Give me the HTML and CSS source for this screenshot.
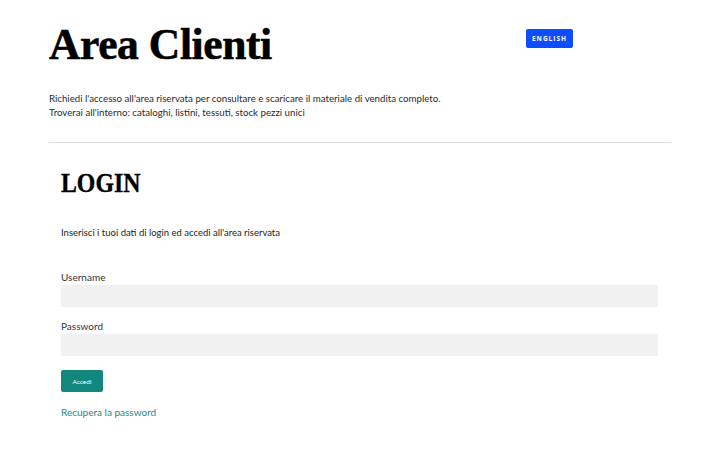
FILE: index.html
```html
<!DOCTYPE html>
<html lang="it">
<head>
<meta charset="utf-8">
<title>Area Clienti</title>
<link rel="stylesheet" href="styles.css">
</head>
<body>
<main class="page">
  <header class="intro">
    <div class="intro-top">
      <h1 class="title">Area Clienti</h1>
      <a class="lang-btn" href="#">ENGLISH</a>
    </div>
    <p class="lead">Richiedi l'accesso all'area riservata per consultare e scaricare il materiale di vendita completo.<br>Troverai all'interno: cataloghi, listini, tessuti, stock pezzi unici</p>
  </header>
  <section class="login">
    <h2 class="login-title">LOGIN</h2>
    <p class="login-text">Inserisci i tuoi dati di login ed accedi all'area riservata</p>
    <form class="login-form">
      <label class="field">
        <span class="field-label">Username</span>
        <input class="field-input" type="text">
      </label>
      <label class="field">
        <span class="field-label">Password</span>
        <input class="field-input" type="password">
      </label>
      <button class="submit" type="button">Accedi</button>
      <a class="recover" href="#">Recupera la password</a>
    </form>
  </section>
</main>
</body>
</html>
```
FILE: styles.css
```css
* { box-sizing: border-box; }
html, body { margin: 0; padding: 0; background: #fff; }
body {
  font-family: "Lato", "Noto Sans", sans-serif;
  color: #222;
}
.page {
  width: 622px;
  margin-left: 49px;
}
.intro-top {
  display: flex;
  align-items: flex-start;
  padding-top: 18px;
}
.title {
  margin: 0;
  font-family: "Liberation Serif", serif;
  font-weight: 900;
  font-size: 43.5px;
  line-height: 52px;
  letter-spacing: -0.4px;
  color: #000;
  width: 477px;
  -webkit-text-stroke: 0.6px #000;
}
.lang-btn {
  margin-top: 11px;
  display: inline-block;
  background: #0b4dff;
  color: #fff;
  text-decoration: none;
  font-family: "Open Sans", sans-serif;
  font-weight: 700;
  font-size: 6.5px;
  letter-spacing: 1px;
  width: 47px;
  height: 19px;
  line-height: 19px;
  text-align: center;
  border-radius: 2px;
}
.lead {
  margin: 21px 0 0;
  font-size: 9.7px;
  line-height: 14px;
  color: #2a2a2a;
}
.intro {
  border-bottom: 1px solid #ddd;
  padding-bottom: 23px;
}
.login {
  padding: 0 13px 0 12px;
}
.login-title {
  margin: 22px 0 0;
  font-family: "Liberation Serif", serif;
  font-weight: 900;
  font-size: 28px;
  line-height: 36px;
  color: #000;
  transform: scaleX(0.85);
  transform-origin: left;
  -webkit-text-stroke: 0.4px #000;
}
.login-text {
  margin: 25px 0 0;
  font-size: 9.5px;
  line-height: 14px;
  color: #222;
}
.login-form {
  margin-top: 30px;
  display: flex;
  flex-direction: column;
  align-items: flex-start;
}
.field {
  display: flex;
  flex-direction: column;
  width: 100%;
  margin-bottom: 12px;
}
.field-label {
  font-size: 10px;
  line-height: 14px;
  color: #333;
  margin-bottom: 1px;
}
.field-input {
  width: 100%;
  height: 22px;
  border: 0;
  background: #f1f1f1;
  padding: 0 6px;
}
.submit {
  margin-top: 2px;
  width: 42px;
  height: 22px;
  border: 0;
  border-radius: 2px;
  background: #11877d;
  color: #fff;
  font-family: "Lato", sans-serif;
  font-size: 6.5px;
  padding: 0;
}
.recover {
  margin-top: 13px;
  font-size: 10px;
  line-height: 14px;
  color: #1b8a86;
  text-decoration: none;
}
```
